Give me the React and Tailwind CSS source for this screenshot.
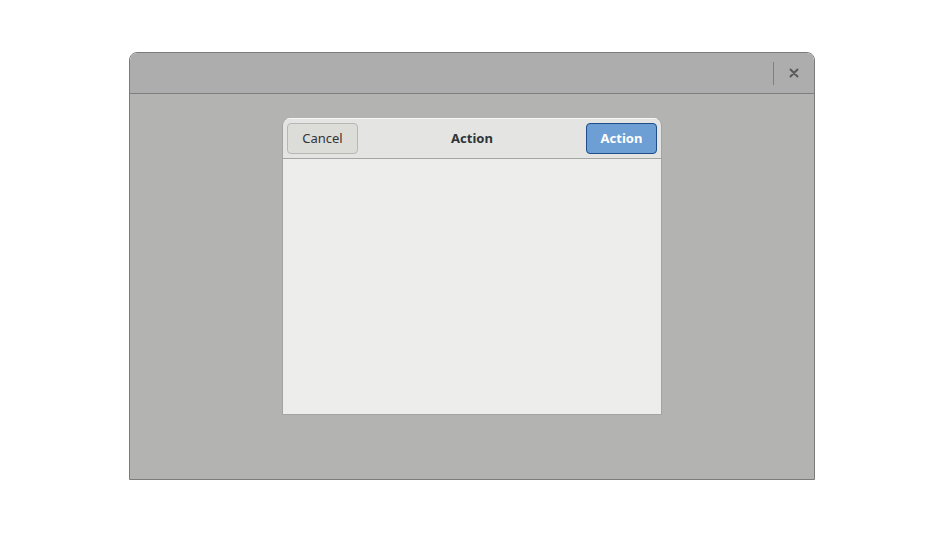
import React from 'react';

const font = { fontFamily: '"Noto Sans", "Open Sans", sans-serif' };

const App = () => (
    <div className="w-[940px] h-[540px] bg-white pt-[52px] pl-[129px]" style={font}>
        {/* window */}
        <div className="w-[686px] h-[428px] flex flex-col border border-[#7b7b7b] rounded-t-[8px] overflow-hidden">
            <div className="h-[41px] shrink-0 bg-[#adadad] border-b border-[#7e7e7e] flex items-center justify-end">
                <div className="w-px h-[23px] bg-[#7f7f7f]" />
                <button className="w-[40px] h-[40px] flex items-center justify-center text-[#555]">
                    <svg width="10" height="10" viewBox="0 0 10 10">
                        <path d="M1.5 1.5l7 7M8.5 1.5l-7 7" stroke="#5a5a5a" strokeWidth="2" strokeLinecap="round" />
                    </svg>
                </button>
            </div>
            <div className="flex-1 bg-[#b3b3b1] pt-[24px] pl-[152px]">
                {/* dialog */}
                <div className="w-[380px] h-[297px] flex flex-col rounded-t-[8px] overflow-hidden border border-[#a3a3a1] border-t-0">
                    <div className="h-[41px] shrink-0 bg-[#e4e4e3] border-b border-[#a5a5a3] shadow-[inset_0_1px_0_#f6f6f5] px-[4px] flex items-center justify-between">
                        <button className="w-[71px] h-[31px] pt-px rounded-[4px] border border-[#b7b7b4] bg-[#dcdcd9] text-[13px] text-[#333]">
                            Cancel
                        </button>
                        <span className="pt-px text-[13px] font-bold text-[#2e3436]">Action</span>
                        <button className="w-[71px] h-[31px] pt-px rounded-[4px] border border-[#1f4d8a] bg-[#6d9ed4] text-[13px] font-bold text-white">
                            Action
                        </button>
                    </div>
                    <div className="flex-1 bg-[#ededec]" />
                </div>
            </div>
        </div>
    </div>
);

export default App;
